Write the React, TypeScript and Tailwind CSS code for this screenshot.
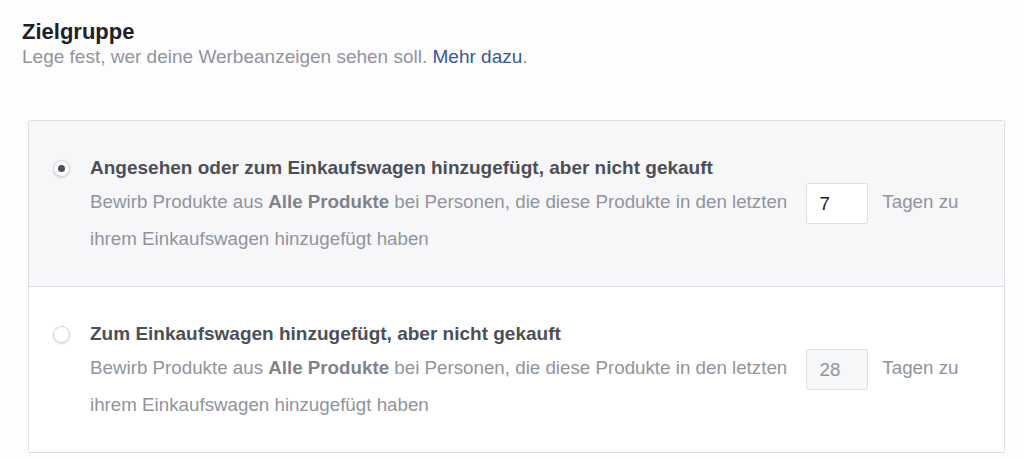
import React from "react";

const options = [
  {
    id: "viewed",
    title: "Angesehen oder zum Einkaufswagen hinzugefügt, aber nicht gekauft",
    days: "7",
    selected: true,
  },
  {
    id: "cart",
    title: "Zum Einkaufswagen hinzugefügt, aber nicht gekauft",
    days: "28",
    selected: false,
  },
];

function Radio({ checked }: { checked: boolean }) {
  return (
    <span className="mt-[4px] flex h-[17px] w-[17px] shrink-0 items-center justify-center rounded-full border border-[#d4d6da] bg-white shadow-[0_1px_2px_rgba(0,0,0,0.15)]">
      {checked && <span className="h-[7px] w-[7px] rounded-full bg-[#4b4f56]" />}
    </span>
  );
}

export default function App() {
  return (
    <div
      className="min-h-screen bg-[#fdfdfe] pb-4"
      style={{ fontFamily: '"Liberation Sans", Arial, sans-serif' }}
    >
      <div className="px-[22px] pt-[19px]">
        <h2 className="text-[22px] font-bold leading-[26px] text-[#1d2129]">Zielgruppe</h2>
        <p className="text-[19px] leading-[24px] text-[#90949c]">
          Lege fest, wer deine Werbeanzeigen sehen soll.{" "}
          <a className="text-[#365899]">Mehr dazu</a>.
        </p>
      </div>

      <div className="ml-[28px] mt-[51px] w-[977px] rounded-[3px] border border-b-0 border-[#dddfe2]">
        {options.map((o) => (
          <div
            key={o.id}
            className={`flex gap-[20px] border-b border-[#dddfe2] pb-[29px] pl-[24px] pr-[30px] pt-[35px] ${
              o.selected ? "bg-[#f7f7fa]" : "bg-white"
            }`}
          >
            <Radio checked={o.selected} />
            <div className="flex-1">
              <div className="text-[19px] font-bold leading-[24px] text-[#4b4f56]">{o.title}</div>
              <p className="mt-[3px] text-[18.75px] leading-[37px] text-[#90949c]">
                Bewirb Produkte aus <b className="text-[#7f8389]">Alle Produkte</b> bei Personen, die
                diese Produkte in den letzten{" "}
                <span
                  className={`-my-[4px] ml-[14px] mr-[9px] inline-block h-[41px] w-[62px] rounded-[2px] border border-[#dddfe2] px-[12px] align-middle leading-[39px] ${
                    o.selected ? "bg-white text-[#1d2129]" : "bg-[#f6f7f9] text-[#90949c]"
                  }`}
                >
                  {o.days}
                </span>{" "}
                Tagen zu ihrem Einkaufswagen hinzugefügt haben
              </p>
            </div>
          </div>
        ))}
      </div>
    </div>
  );
}
